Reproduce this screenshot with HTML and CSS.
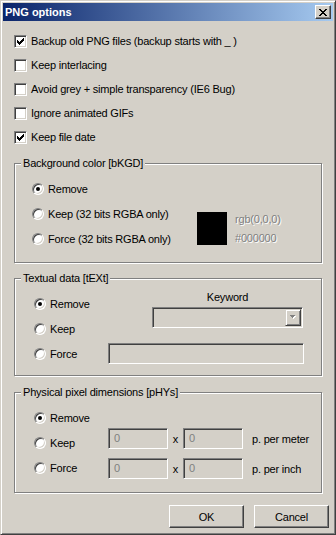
FILE: index.html
```html
<!DOCTYPE html>
<html lang="en">
<head>
    <meta charset="UTF-8">
    <link rel="stylesheet" href="styles.css">
    <title>PNG options</title>
</head>
<body>
    <div class="window">
        <div class="titlebar">
            <span class="title">PNG options</span>
            <span class="close">
                <svg width="8" height="7" viewBox="0 0 8 7" shape-rendering="crispEdges">
                    <path d="M0 0h2v1H0zM6 0h2v1H6zM1 1h2v1H1zM5 1h2v1H5zM2 2h4v1H2zM3 3h2v1H3zM2 4h4v1H2zM1 5h2v1H1zM5 5h2v1H5zM0 6h2v1H0zM6 6h2v1H6z" fill="#000"/>
                </svg>
            </span>
        </div>
        <div class="content">
            <div class="checks">
                <div class="opt"><span class="check on"></span>Backup old PNG files (backup starts with _ )</div>
                <div class="opt"><span class="check"></span>Keep interlacing</div>
                <div class="opt"><span class="check"></span>Avoid grey + simple transparency (IE6 Bug)</div>
                <div class="opt"><span class="check"></span>Ignore animated GIFs</div>
                <div class="opt"><span class="check on"></span>Keep file date</div>
            </div>

            <div class="group" id="bkgd">
                <div class="legend">Background color [bKGD]</div>
                <div class="body">
                    <div class="opt r1"><span class="radio on"></span>Remove</div>
                    <div class="opt r2"><span class="radio"></span>Keep (32 bits RGBA only)</div>
                    <div class="opt r3"><span class="radio"></span>Force (32 bits RGBA only)</div>
                    <div class="swatch"></div>
                    <div class="color_text">
                        <div>rgb(0,0,0)</div>
                        <div>#000000</div>
                    </div>
                </div>
            </div>

            <div class="group" id="text">
                <div class="legend">Textual data [tEXt]</div>
                <div class="body">
                    <div class="opt r1"><span class="radio on"></span>Remove</div>
                    <div class="opt r2"><span class="radio"></span>Keep</div>
                    <div class="opt r3"><span class="radio"></span>Force</div>
                    <div class="keyword">
                        <div class="kw_label">Keyword</div>
                        <div class="combo field">
                            <span class="combo_btn">
                                <svg width="7" height="5" viewBox="0 0 7 5" shape-rendering="crispEdges">
                                    <path d="M1 1h5v1H1zM2 2h3v1H2zM3 3h1v1H3z" fill="#fff"/>
                                    <path d="M0 0h5v1H0zM1 1h3v1H1zM2 2h1v1H2z" fill="#808080"/>
                                </svg>
                            </span>
                        </div>
                    </div>
                    <div class="field text_field"></div>
                </div>
            </div>

            <div class="group" id="phys">
                <div class="legend">Physical pixel dimensions [pHYs]</div>
                <div class="body">
                    <div class="opt r1"><span class="radio on"></span>Remove</div>
                    <div class="opt r2"><span class="radio"></span>Keep</div>
                    <div class="opt r3"><span class="radio"></span>Force</div>
                    <div class="dims">
                        <div class="field num">0</div>
                        <span class="times">x</span>
                        <div class="field num">0</div>
                        <span class="unit">p. per meter</span>
                        <div class="field num">0</div>
                        <span class="times">x</span>
                        <div class="field num">0</div>
                        <span class="unit">p. per inch</span>
                    </div>
                </div>
            </div>

            <div class="buttons">
                <span class="btn">OK</span>
                <span class="btn">Cancel</span>
            </div>
        </div>
    </div>
</body>
</html>
```

FILE: styles.css
```css
body {
    margin: 0;
    padding: 0;
    background: #d4d0c8;
    font-family: "Liberation Sans", Arial, sans-serif;
    font-size: 11px;
    letter-spacing: -0.2px;
    color: #000;
}
.window {
    width: 336px;
    height: 535px;
    box-sizing: border-box;
    padding: 2px;
    background: #d4d0c8;
    border: 1px solid;
    border-color: #d4d0c8 #404040 #404040 #d4d0c8;
    box-shadow: inset 1px 1px 0 #fff, inset -1px -1px 0 #808080;
}
.titlebar {
    height: 18px;
    padding: 0 2px;
    display: flex;
    align-items: center;
    justify-content: space-between;
    background: linear-gradient(to right, #0a246a, #a6caf0);
}
.title {
    color: #fff;
    font-weight: bold;
    letter-spacing: 0;
}
.close {
    width: 16px;
    height: 14px;
    box-sizing: border-box;
    display: flex;
    align-items: center;
    justify-content: center;
    background: #d4d0c8;
    border: 1px solid;
    border-color: #fff #404040 #404040 #fff;
    box-shadow: inset -1px -1px 0 #808080;
}
.content {
    padding: 8px 0 0 11px;
}
.opt {
    display: flex;
    align-items: center;
    gap: 4px;
    height: 24px;
    white-space: nowrap;
}
.check {
    width: 13px;
    height: 13px;
    box-sizing: border-box;
    background: #fff;
    border: 1px solid;
    border-color: #808080 #fff #fff #808080;
    box-shadow: inset 1px 1px 0 #404040, inset -1px -1px 0 #d4d0c8;
    position: relative;
}
.check.on::after {
    content: "";
    position: absolute;
    left: 2px;
    top: 2px;
    width: 7px;
    height: 7px;
    background: linear-gradient(#000, #000) 0 2px / 1px 3px no-repeat,
        linear-gradient(#000, #000) 1px 3px / 1px 3px no-repeat,
        linear-gradient(#000, #000) 2px 4px / 1px 3px no-repeat,
        linear-gradient(#000, #000) 3px 3px / 1px 3px no-repeat,
        linear-gradient(#000, #000) 4px 2px / 1px 3px no-repeat,
        linear-gradient(#000, #000) 5px 1px / 1px 3px no-repeat,
        linear-gradient(#000, #000) 6px 0 / 1px 3px no-repeat;
}
.radio {
    width: 12px;
    height: 12px;
    box-sizing: border-box;
    border-radius: 50%;
    background: #fff;
    border: 1px solid;
    border-color: #808080 #fff #fff #808080;
    box-shadow: inset 1px 1px 0 #404040, inset -1px -1px 0 #d4d0c8;
    position: relative;
}
.radio.on::after {
    content: "";
    position: absolute;
    left: 3px;
    top: 3px;
    width: 4px;
    height: 4px;
    border-radius: 50%;
    background: #000;
}

/* group boxes */
.group {
    width: 308px;
    box-sizing: border-box;
    border: 1px solid #808080;
    box-shadow: 1px 1px 0 #fff, inset 1px 1px 0 #fff;
}
.legend {
    width: max-content;
    margin: -7px 0 0 6px;
    padding: 0 2px;
    line-height: 13px;
    background: #d4d0c8;
}
.group .body {
    display: grid;
    grid-template-rows: repeat(3, 25px);
    padding-top: 6px;
}
.group .opt {
    height: 25px;
    grid-column: 1;
}
.group .r1 { grid-row: 1; }
.group .r2 { grid-row: 2; }
.group .r3 { grid-row: 3; }

#bkgd {
    margin-top: 14px;
    padding-bottom: 11px;
}
#bkgd .body {
    margin-left: 17px;
    grid-template-columns: 165px 30px auto;
}
.swatch {
    grid-column: 2;
    grid-row: 2 / 4;
    align-self: start;
    margin-top: 11px;
    height: 33px;
    background: #000;
}
.color_text {
    grid-column: 3;
    grid-row: 2 / 4;
    margin: 9px 0 0 8px;
    line-height: 19px;
    color: #808080;
    text-shadow: 1px 1px 0 #fff;
}

#text {
    margin-top: 15px;
    padding-bottom: 9px;
}
#text .body {
    margin-left: 19px;
    grid-template-columns: 74px 44px 151px;
}
.keyword {
    grid-column: 3;
    grid-row: 1 / 3;
}
.kw_label {
    line-height: 13px;
    text-align: center;
}
.field {
    height: 21px;
    box-sizing: border-box;
    background: #d4d0c8;
    border: 1px solid;
    border-color: #808080 #fff #fff #808080;
    box-shadow: inset 1px 1px 0 #404040, inset -1px -1px 0 #d4d0c8;
}
.combo {
    margin-top: 3px;
    padding: 1px;
    display: flex;
    justify-content: flex-end;
}
.combo_btn {
    width: 16px;
    height: 17px;
    box-sizing: border-box;
    display: flex;
    align-items: center;
    justify-content: center;
    background: #d4d0c8;
    border: 1px solid;
    border-color: #d4d0c8 #404040 #404040 #d4d0c8;
    box-shadow: inset 1px 1px 0 #fff, inset -1px -1px 0 #808080;
}
.text_field {
    grid-column: 2 / 4;
    grid-row: 3;
    align-self: center;
    width: 196px;
}

#phys {
    margin-top: 16px;
    padding-bottom: 12px;
}
#phys .body {
    margin-left: 19px;
    grid-template-columns: 74px auto;
}
.dims {
    grid-column: 2;
    grid-row: 2 / 4;
    align-self: start;
    margin-top: -2px;
    display: grid;
    grid-template-columns: 60px 15px 60px auto;
    grid-template-rows: 21px 21px;
    row-gap: 9px;
    align-items: center;
}
.num {
    padding-left: 5px;
    line-height: 19px;
    color: #808080;
}
.times {
    text-align: center;
}
.unit {
    margin-left: 9px;
}

.buttons {
    margin-top: 12px;
    padding-right: 4px;
    display: flex;
    justify-content: flex-end;
    gap: 10px;
}
.btn {
    width: 75px;
    height: 23px;
    box-sizing: border-box;
    display: flex;
    align-items: center;
    justify-content: center;
    background: #d4d0c8;
    border: 1px solid;
    border-color: #fff #404040 #404040 #fff;
    box-shadow: inset -1px -1px 0 #808080;
}
```
